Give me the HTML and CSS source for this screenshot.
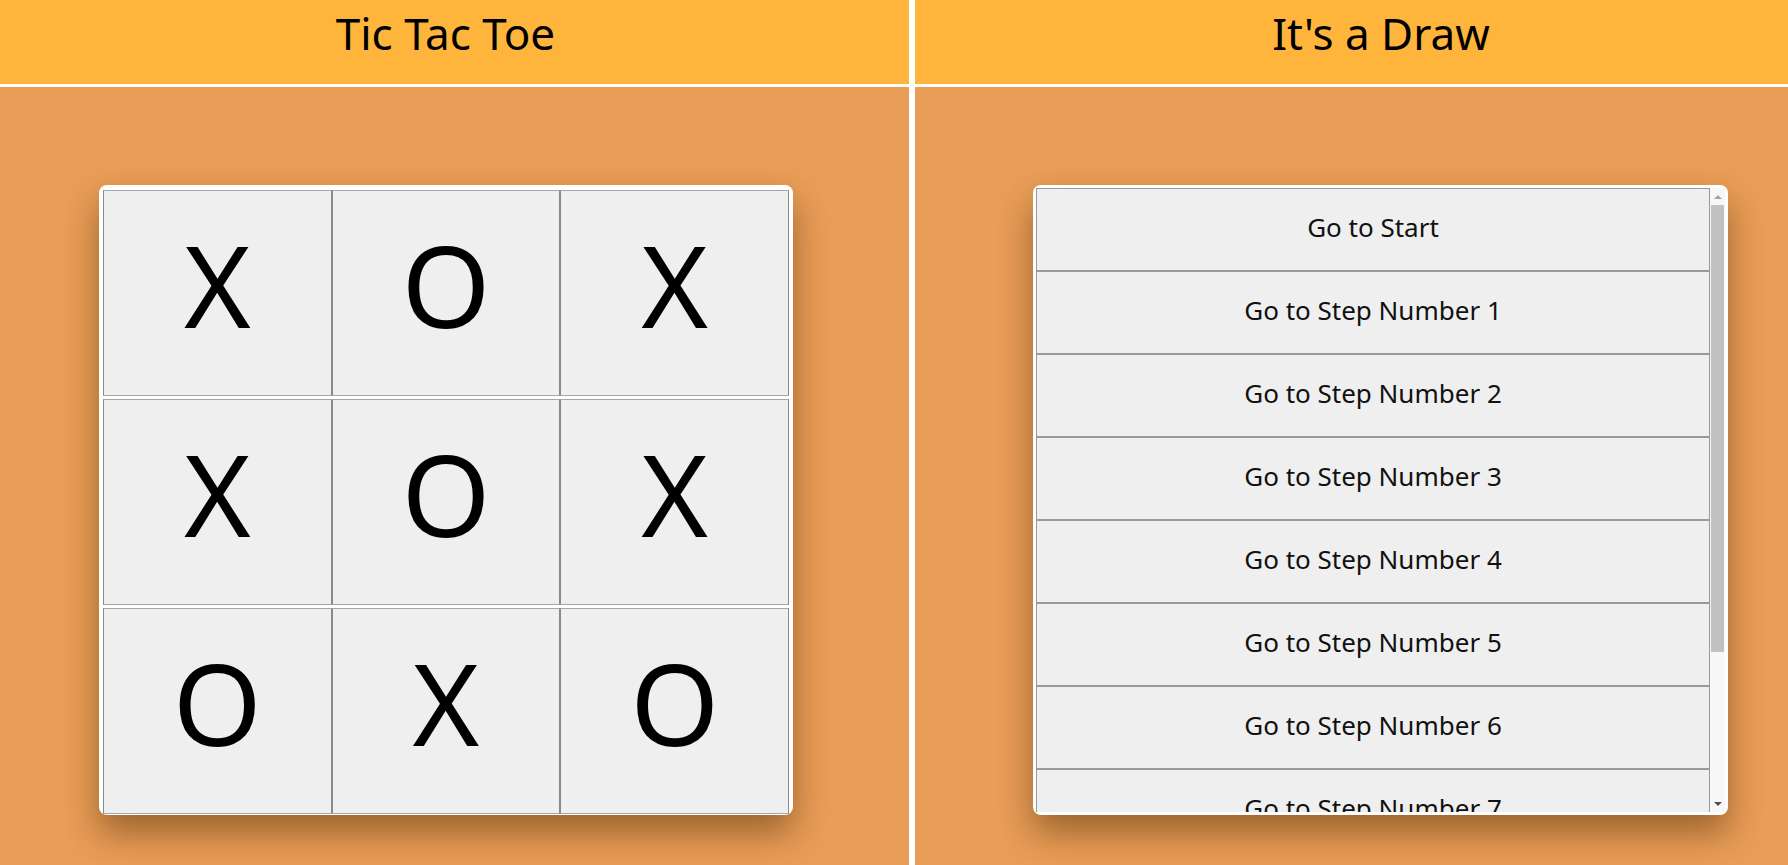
FILE: index.html
```html
<!DOCTYPE html>
<html lang="en">
<head>
<meta charset="utf-8">
<title>Tic Tac Toe</title>
<link rel="stylesheet" href="styles.css">
</head>
<body>
<div class="app">
  <header class="bar bar-left"><h1 class="title">Tic Tac Toe</h1></header>
  <header class="bar bar-right"><h1 class="title">It's a Draw</h1></header>
  <main class="panel panel-left">
    <div class="card board">
      <div class="cell">X</div>
      <div class="cell">O</div>
      <div class="cell">X</div>
      <div class="cell">X</div>
      <div class="cell">O</div>
      <div class="cell">X</div>
      <div class="cell">O</div>
      <div class="cell">X</div>
      <div class="cell">O</div>
    </div>
  </main>
  <section class="panel panel-right">
    <div class="card history-card">
      <div class="history">
        <button class="step">Go to Start</button>
        <button class="step">Go to Step Number 1</button>
        <button class="step">Go to Step Number 2</button>
        <button class="step">Go to Step Number 3</button>
        <button class="step">Go to Step Number 4</button>
        <button class="step">Go to Step Number 5</button>
        <button class="step">Go to Step Number 6</button>
        <button class="step">Go to Step Number 7</button>
        <button class="step">Go to Step Number 8</button>
        <button class="step">Go to Step Number 9</button>
      </div>
      <div class="scrollbar" aria-hidden="true">
        <div class="sb-btn"><span class="tri tri-up"></span></div>
        <div class="sb-track"><div class="sb-thumb"></div></div>
        <div class="sb-btn"><span class="tri tri-down"></span></div>
      </div>
    </div>
  </section>
</div>
</body>
</html>
```
FILE: styles.css
```css
html, body {
  margin: 0;
  padding: 0;
  height: 100%;
  overflow: hidden;
}

body {
  background: #ffffff;
  font-family: "Noto Sans", "Open Sans", sans-serif;
  color: #111;
}

.app {
  display: grid;
  grid-template-columns: 909px 873px;
  grid-template-rows: 84px 1fr;
  column-gap: 6px;
  row-gap: 3px;
  height: 100vh;
}

.bar {
  background: #ffb43b;
  display: flex;
  justify-content: center;
  align-items: flex-start;
  padding-top: 3px;
  box-sizing: border-box;
}

.bar-left {
  padding-right: 18px;
}

.bar-right {
  padding-left: 59px;
}

.title {
  margin: 0;
  font-size: 44px;
  font-weight: 400;
  line-height: 60px;
  color: #000;
}

.panel {
  background: #e99d56;
  padding-top: 98px;
  box-sizing: border-box;
}

.panel-left {
  padding-left: 99px;
}

.panel-right {
  padding-left: 118px;
}

.card {
  background: #ffffff;
  border-radius: 8px;
  box-shadow: 0 18px 34px rgba(60, 30, 0, 0.45);
  box-sizing: border-box;
  width: 694px;
  height: 630px;
  overflow: hidden;
}

.board {
  display: grid;
  grid-template-columns: repeat(3, 1fr);
  grid-template-rows: repeat(3, 206px);
  row-gap: 3px;
  padding: 5px 4px 1px 4px;
}

.cell {
  background: #efefef;
  border: 1px solid #a6a6a6;
  border-left-color: #8a8a8a;
  border-right-color: #8a8a8a;
  display: flex;
  align-items: center;
  justify-content: center;
  padding-bottom: 18px;
  box-sizing: border-box;
  font-size: 114px;
  line-height: 1.36;
  color: #000;
}

.history-card {
  width: 695px;
  padding: 3px;
  display: flex;
}

.history {
  flex: 1;
  min-width: 0;
  overflow: hidden;
}

.scrollbar {
  width: 15px;
  flex: none;
  display: flex;
  flex-direction: column;
  background: #f7f7f7;
}

.sb-btn {
  height: 15px;
  flex: none;
  display: flex;
  align-items: center;
  justify-content: center;
}

.tri {
  width: 0;
  height: 0;
  border-left: 4px solid transparent;
  border-right: 4px solid transparent;
}

.tri-up {
  border-bottom: 4px solid #a3a3a3;
  margin-top: 2px;
}

.tri-down {
  border-top: 4px solid #505050;
  margin-bottom: 2px;
}

.sb-track {
  flex: 1;
  padding: 2px 1px 0 1px;
}

.sb-thumb {
  height: 447px;
  background: #c1c1c1;
}

.step {
  display: flex;
  align-items: center;
  justify-content: center;
  width: 100%;
  height: 83px;
  margin: 0;
  padding: 0 0 5px 0;
  background: #efefef;
  border: 1px solid #999;
  border-radius: 0;
  font-family: "Noto Sans", "Open Sans", sans-serif;
  font-size: 26px;
  color: #111;
  box-sizing: border-box;
}
```
